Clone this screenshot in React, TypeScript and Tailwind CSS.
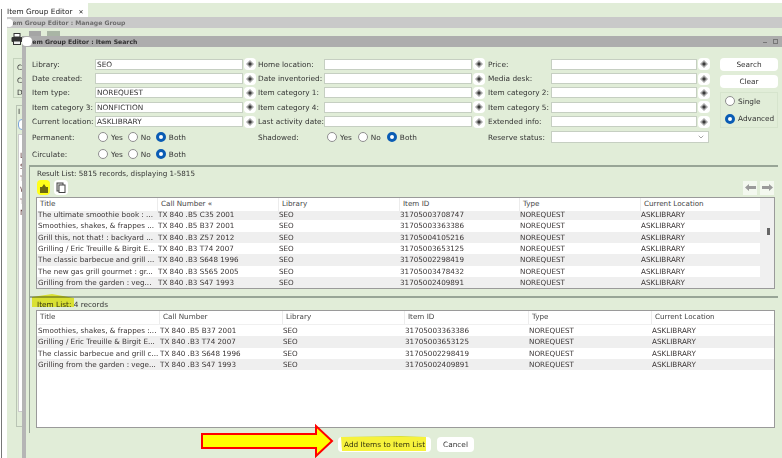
import React from 'react';
import { ChevronDown } from 'lucide-react';

const RESULT_ROWS = [
  ['The ultimate smoothie book : ...', 'TX 840 .B5 C35 2001', '31705003708747'],
  ['Smoothies, shakes, & frappes ...', 'TX 840 .B5 B37 2001', '31705003363386'],
  ['Grill this, not that! : backyard ...', 'TX 840 .B3 Z57 2012', '31705004105216'],
  ['Grilling / Eric Treuille & Birgit E...', 'TX 840 .B3 T74 2007', '31705003653125'],
  ['The classic barbecue and grill ...', 'TX 840 .B3 S648 1996', '31705002298419'],
  ['The new gas grill gourmet : gr...', 'TX 840 .B3 S565 2005', '31705003478432'],
  ['Grilling from the garden : veg...', 'TX 840 .B3 S47 1993', '31705002409891'],
];

const ITEM_ROWS = [
  ['Smoothies, shakes, & frappes :...', 'TX 840 .B5 B37 2001', '31705003363386'],
  ['Grilling / Eric Treuille & Birgit E...', 'TX 840 .B3 T74 2007', '31705003653125'],
  ['The classic barbecue and grill c...', 'TX 840 .B3 S648 1996', '31705002298419'],
  ['Grilling from the garden : vege...', 'TX 840 .B3 S47 1993', '31705002409891'],
];

const RESULT_HEAD = ['Title', 'Call Number «', 'Library', 'Item ID', 'Type', 'Current Location'];
const ITEM_HEAD = ['Title', 'Call Number', 'Library', 'Item ID', 'Type', 'Current Location'];

const FORM_ROWS = [
  ['Library:', 'SEO', 'Home location:', 'Price:'],
  ['Date created:', '', 'Date inventoried:', 'Media desk:'],
  ['Item type:', 'NOREQUEST', 'Item category 1:', 'Item category 2:'],
  ['Item category 3:', 'NONFICTION', 'Item category 4:', 'Item category 5:'],
  ['Current location:', 'ASKLIBRARY', 'Last activity date:', 'Extended info:'],
];

function Lookup() {
  return (
    <div className="w-[12px] h-[12px] bg-white rounded-sm flex items-center justify-center">
      <svg width="8" height="8" viewBox="0 0 8 8">
        <path d="M4 0 L8 4 L4 8 L0 4 Z" fill="#a8a8a8" />
        <path d="M4 2 L6 4 L4 6 L2 4 Z" fill="#3a3a3a" />
      </svg>
    </div>
  );
}

function TextBox({ value }: { value?: string }) {
  return (
    <div className="h-[11px] bg-white border border-[#c6cfc2] flex items-center pl-px leading-none text-[#333]">
      {value}
    </div>
  );
}

function Radio({ label, on }: { label: string; on?: boolean }) {
  return (
    <div className="flex items-center gap-[3px]">
      {on ? (
        <span className="w-[10px] h-[10px] rounded-full bg-white border-[3px] border-[#0a5cb4]" />
      ) : (
        <span className="w-[10px] h-[10px] rounded-full bg-white border border-[#8f8f8f]" />
      )}
      <span>{label}</span>
    </div>
  );
}

function YesNoBoth({ label, wide }: { label: string; wide?: boolean }) {
  return (
    <div className="flex items-center h-[17px]">
      <span className={wide ? 'w-[69px]' : 'w-[66px]'}>{label}</span>
      <div className={`flex items-center ${wide ? 'gap-[6px]' : 'gap-[5px]'}`}>
        <Radio label="Yes" />
        <Radio label="No" />
        <Radio label="Both" on />
      </div>
    </div>
  );
}

function HeaderCell({ text, last }: { text: string; last?: boolean }) {
  return (
    <div className={`pl-[3px] flex items-center ${last ? '' : 'border-r border-[#ececec]'}`}>{text}</div>
  );
}

function DataRow({ row, odd, cols }: { row: string[]; odd: boolean; cols: string }) {
  return (
    <div className={`grid ${cols} h-[11.35px] items-center leading-none whitespace-nowrap text-[#3a3535] ${odd ? 'bg-[#efefef]' : 'bg-white'}`}>
      <div className="pl-px">{row[0]}</div>
      <div>{row[1]}</div>
      <div>SEO</div>
      <div>{row[2]}</div>
      <div>NOREQUEST</div>
      <div>ASKLIBRARY</div>
    </div>
  );
}

function Printer() {
  return (
    <svg width="12" height="12" viewBox="0 0 12 12">
      <rect x="3" y="0.5" width="6" height="3.5" fill="#fff" stroke="#333" />
      <rect x="0.5" y="4" width="11" height="5" rx="1" fill="#333" />
      <rect x="2.5" y="8" width="7" height="3.5" fill="#eee" stroke="#333" />
    </svg>
  );
}

const RESULT_COLS = 'grid-cols-[121px_121px_121px_120px_121px_119px]';
const ITEM_COLS = 'grid-cols-[123px_123px_122px_124px_123px_122px]';

export default function App() {
  return (
    <div className="relative w-[782px] h-[458px] overflow-hidden bg-white text-[7.35px] text-[#333] font-['DejaVu_Sans',sans-serif]">
      {/* Tab strip */}
      <div className="h-[17px] mt-[3px] ml-[2px] bg-[#e1edd8] flex">
        <div className="w-[86px] bg-white flex items-center pl-[5px] gap-[6px] text-[7.35px] text-[#222]">
          <span>Item Group Editor</span>
          <span className="text-[6px]">✕</span>
        </div>
      </div>

      {/* Manage Group window, mostly hidden behind the search dialog */}
      <div className="absolute left-[7px] top-[17px] right-0 bottom-0 bg-[#e1edd8] overflow-hidden">
        <div className="h-[11px] bg-[#c9c9c9] flex items-center font-bold text-[6.1px] text-[#6d6d6d]">
          Item Group Editor : Manage Group
        </div>
        <div className="flex items-start pl-[4px] pt-[5px] gap-[6px]">
          <Printer />
          <div className="flex gap-[6px] -mt-[2px]">
            <div className="w-[12px] h-[5px] bg-[#a5a5a5]" />
            <div className="w-[13px] h-[6px] bg-[#a9b5a5]" />
          </div>
        </div>
        <div className="ml-[6px] mt-[13px] h-[40px] w-[40px] border border-[#c5d3bd] pl-[3px] pt-[3px] leading-[12.5px] text-[#333]">
          <div>C</div>
          <div>C</div>
          <div>D</div>
        </div>
        <div className="ml-[9px] mt-[7px] w-[40px] h-[322px] border border-[#b9c4b4] pl-px pt-px">
          <div className="leading-[10px]">I</div>
          <div className="mt-[2px] h-[11px] border border-[#7ca6d8] bg-white rounded-sm" />
          <div className="mt-[4px] h-[278px] bg-white border border-[#ccc] pl-px pt-[15px] leading-[11.4px] text-[#5a3030]">
            <div>L</div>
            <div>S</div>
            <div>T</div>
            <div>W</div>
            <div>T</div>
            <div>M</div>
          </div>
        </div>
      </div>
      <div className="absolute left-[1px] top-[9px] bottom-0 w-px bg-[#777]" />
      <div className="absolute left-[5px] top-[19px] w-[8px] h-[8px] bg-white rounded-sm" />

      {/* Item Search dialog */}
      <div className="absolute left-[22px] top-[36px] right-0 bottom-0 flex flex-col bg-[#e1edd8]">
        <div className="h-[11px] bg-[#adadad] flex items-center justify-between pl-[5px] pr-[4px] font-bold text-[6.15px] text-[#333]">
          <span>Item Group Editor : Item Search</span>
          <div className="flex items-center gap-[6px]">
            <span className="w-[4px] h-px bg-[#777] mt-[2px]" />
            <span className="w-[5px] h-[5px] border border-[#777]" />
          </div>
        </div>

        <div className="flex-1 border-l-4 border-[#b5b5b5] pl-[3px] pr-[4px] pt-[10px]">
          {/* Search form */}
          <div className="flex ml-[3px] h-[105px]">
            <div className="w-[678px]">
              <div className="grid grid-cols-[63px_148px_15px_66px_148px_16px_63px_146px_13px] auto-rows-[14.4px] items-center">
                {FORM_ROWS.map(r => (
                  <React.Fragment key={r[0]}>
                    <span className="whitespace-nowrap">{r[0]}</span>
                    <TextBox value={r[1]} />
                    <div className="pl-px"><Lookup /></div>
                    <span className="whitespace-nowrap">{r[2]}</span>
                    <TextBox />
                    <div className="pl-px"><Lookup /></div>
                    <span className="whitespace-nowrap">{r[3]}</span>
                    <TextBox />
                    <div className="pl-px"><Lookup /></div>
                  </React.Fragment>
                ))}
              </div>
              <div className="flex">
                <div className="w-[226px]">
                  <YesNoBoth label="Permanent:" />
                  <YesNoBoth label="Circulate:" />
                </div>
                <div className="w-[230px]">
                  <YesNoBoth label="Shadowed:" wide />
                </div>
                <div className="flex items-center h-[17px]">
                  <span className="w-[63px]">Reserve status:</span>
                  <div className="w-[158px] h-[12px] bg-white border border-[#c6cfc2] flex items-center justify-end pr-[3px]">
                    <ChevronDown size={8} color="#777" />
                  </div>
                </div>
              </div>
            </div>
            <div className="ml-[10px] w-[58px] flex flex-col">
              <button className="h-[13px] bg-white rounded-sm text-[#333] mt-px">Search</button>
              <button className="h-[13px] bg-white rounded-sm text-[#333] mt-[4px]">Clear</button>
              <div className="mt-[4px] h-[36px] border border-[#d6e4cd] pl-[4px] flex flex-col justify-center gap-[6px]">
                <Radio label="Single" />
                <Radio label="Advanced" on />
              </div>
            </div>
          </div>

          {/* Result List */}
          <div className="mt-[3px] h-[131px] border-t-2 border-l border-[#98a596] pl-[6px] pr-[3px] pt-px">
            <div className="h-[11px] leading-[11px] pl-px text-[7.2px]">Result List: 5815 records, displaying 1-5815</div>
            <div className="flex items-center justify-between h-[17px] pr-px">
              <div className="flex gap-[4px] pl-px">
                <div className="w-[13px] h-[15px] flex items-center justify-center bg-[#ffff1a] rounded-sm">
                  <svg width="10" height="10" viewBox="0 0 10 10">
                    <path d="M1 10 V4 H3 L5 1 L7 4 H9 V10 Z" fill="#6d6a12" />
                  </svg>
                </div>
                <div className="w-[14px] h-[15px] flex items-center justify-center bg-white rounded-sm">
                  <svg width="10" height="11" viewBox="0 0 10 11">
                    <rect x="1" y="1" width="6" height="8" fill="#ddd" stroke="#444" />
                    <rect x="3" y="3" width="6" height="7.5" fill="#fff" stroke="#444" />
                  </svg>
                </div>
              </div>
              <div className="flex gap-[3px]">
                <div className="w-[14px] h-[14px] bg-white/60 flex items-center justify-center">
                  <svg width="11" height="7" viewBox="0 0 11 7"><path d="M0 3.5 L4 0 V2 H11 V5 H4 V7 Z" fill="#9a9a9a" /></svg>
                </div>
                <div className="w-[14px] h-[14px] bg-white/60 flex items-center justify-center">
                  <svg width="11" height="7" viewBox="0 0 11 7"><path d="M11 3.5 L7 0 V2 H0 V5 H7 V7 Z" fill="#9a9a9a" /></svg>
                </div>
              </div>
            </div>
            <div className="mt-px h-[92px] border border-[#9a9a9a] bg-white flex overflow-hidden text-[7.2px]">
              <div className="w-[723px] overflow-hidden">
                <div className={`relative z-10 grid ${RESULT_COLS} h-[13px] bg-white text-[#444]`}>
                  {RESULT_HEAD.map((h, i) => <HeaderCell key={h} text={h} last={i === 5} />)}
                </div>
                <div className="-mt-[2px]">
                  {RESULT_ROWS.map((r, i) => <DataRow key={r[2]} row={r} odd={i % 2 === 0} cols={RESULT_COLS} />)}
                </div>
              </div>
              <div className="flex-1 bg-[#f0f0f0] relative">
                <div className="absolute left-[7px] top-[30px] w-[3px] h-[7px] bg-[#666]" />
              </div>
            </div>
          </div>

          {/* Item List */}
          <div className="h-[137px] border-t-2 border-l border-[#98a596] pl-[6px] pr-[3px] pt-px">
            <div className="h-[11px] leading-[11px] pl-px">Item List: 4 records</div>
            <div className="h-[118px] border border-[#9a9a9a] bg-white overflow-hidden text-[7.2px]">
              <div className={`grid ${ITEM_COLS} h-[14px] text-[#444] border-b border-[#f0f0f0]`}>
                {ITEM_HEAD.map((h, i) => <HeaderCell key={h} text={h} last={i === 5} />)}
              </div>
              <div>
                {ITEM_ROWS.map((r, i) => <DataRow key={r[2]} row={r} odd={i % 2 === 1} cols={ITEM_COLS} />)}
              </div>
            </div>
          </div>

          {/* Footer buttons */}
          <div className="flex pl-[309px] pt-[4px] gap-[6px]">
            <button className="w-[93px] h-[15px] bg-white rounded-sm text-[#333]">Add Items to Item List</button>
            <button className="w-[37px] h-[15px] bg-white rounded-sm text-[#333]">Cancel</button>
          </div>
        </div>
      </div>

      <div className="absolute left-[22px] top-[37px] w-[10px] h-[9px] bg-white rounded-sm" />

      {/* Annotations drawn over the screenshot */}
      <svg className="absolute left-0 top-0 pointer-events-none" width="782" height="458">
        <path d="M32 297 L52 294 L74 298 V307 H32 Z" fill="#f6f23c" style={{ mixBlendMode: 'multiply' }} />
        <path d="M341 437 L400 436 L426 437 V451 H342 Z" fill="#f6f23c" style={{ mixBlendMode: 'multiply' }} />
        <path d="M202 434 H316 V426 L332 441 L316 456 V448 H202 Z" fill="#ffff00" stroke="#ff0000" strokeWidth="2" />
      </svg>
    </div>
  );
}
